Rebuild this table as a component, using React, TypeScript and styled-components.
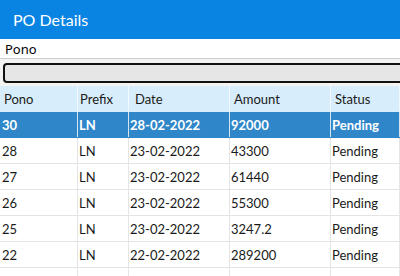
import React from "react";
import styled, { createGlobalStyle } from "styled-components";

const Global = createGlobalStyle`
  html, body { margin: 0; padding: 0; background: #ffffff; overflow: hidden; }
  body { width: 400px; height: 276px; font-family: "Lato", "Noto Sans", sans-serif; }
  * { box-sizing: border-box; }
`;

const Page = styled.div`
  width: 400px;
  height: 276px;
  overflow: hidden;
  display: flex;
  flex-direction: column;
`;

const TitleBar = styled.header`
  flex: none;
  height: 39px;
  background: #0a84e2;
  color: #ffffff;
  font-family: "Lato", sans-serif;
  font-size: 16px;
  line-height: 39px;
  padding-left: 13px;
`;

const SearchField = styled.div`
  flex: none;
  height: 20px;
  border-bottom: 1px solid #cfcfcf;
  padding-left: 5px;
  font-family: "Noto Sans", "DejaVu Sans", sans-serif;
  font-size: 13px;
  line-height: 20px;
  color: #000000;
  background: #ffffff;
`;

const ButtonBar = styled.div`
  flex: none;
  background: #f3f3f3;
  padding: 4px 0 3px 3px;
  overflow: hidden;
`;

const WideButton = styled.button`
  display: block;
  width: calc(100% + 8px);
  height: 20px;
  border: 2px solid #111111;
  border-radius: 4px;
  background: #e6e6e6;
  margin: 0;
  padding: 0;
`;

const COLS = "78px 51px 101px 101px 1fr";

const Row = styled.div<{ $variant: "head" | "selected" | "plain" }>`
  flex: none;
  display: grid;
  grid-template-columns: ${COLS};
  width: 100%;
  height: 26px;
  background: ${(p) =>
    p.$variant === "head" ? "#d7edfb" : p.$variant === "selected" ? "#2f87c9" : "#ffffff"};
  color: ${(p) => (p.$variant === "selected" ? "#ffffff" : "#1a1a1a")};
  font-weight: ${(p) => (p.$variant === "selected" ? 700 : 400)};
  border-bottom: 1px solid
    ${(p) => (p.$variant === "plain" ? "#e4e4e4" : "transparent")};
  --line: ${(p) =>
    p.$variant === "head" ? "#f2f8fd" : p.$variant === "selected" ? "#d8e4ee" : "#e4e4e4"};
`;

const Cell = styled.div<{ $pad: number }>`
  font-family: "Lato", sans-serif;
  font-size: 13px;
  line-height: 25px;
  padding-top: 1px;
  padding-left: ${(p) => p.$pad}px;
  border-right: 1px solid var(--line);
  white-space: nowrap;
  overflow: hidden;
`;

const headers: { label: string; pad: number }[] = [
  { label: "Pono", pad: 4 },
  { label: "Prefix", pad: 2 },
  { label: "Date", pad: 6 },
  { label: "Amount", pad: 4 },
  { label: "Status", pad: 4 },
];

const data = [
  ["30", "LN", "28-02-2022", "92000", "Pending"],
  ["28", "LN", "23-02-2022", "43300", "Pending"],
  ["27", "LN", "23-02-2022", "61440", "Pending"],
  ["26", "LN", "23-02-2022", "55300", "Pending"],
  ["25", "LN", "23-02-2022", "3247.2", "Pending"],
  ["22", "LN", "22-02-2022", "289200", "Pending"],
  ["", "", "", "", ""],
];

const dataPads = [2, 1, 1, 1, 1];

export default function App() {
  return (
    <>
      <Global />
      <Page>
        <TitleBar>PO Details</TitleBar>
        <SearchField role="textbox">Pono</SearchField>
        <ButtonBar>
          <WideButton type="button" aria-label="Search" />
        </ButtonBar>
        <Row $variant="head">
          {headers.map((h) => (
            <Cell key={h.label} $pad={h.pad}>
              {h.label}
            </Cell>
          ))}
        </Row>
        {data.map((r, i) => (
          <Row key={i} $variant={i === 0 ? "selected" : "plain"}>
            {r.map((v, j) => (
              <Cell key={j} $pad={dataPads[j]}>
                {v}
              </Cell>
            ))}
          </Row>
        ))}
      </Page>
    </>
  );
}
